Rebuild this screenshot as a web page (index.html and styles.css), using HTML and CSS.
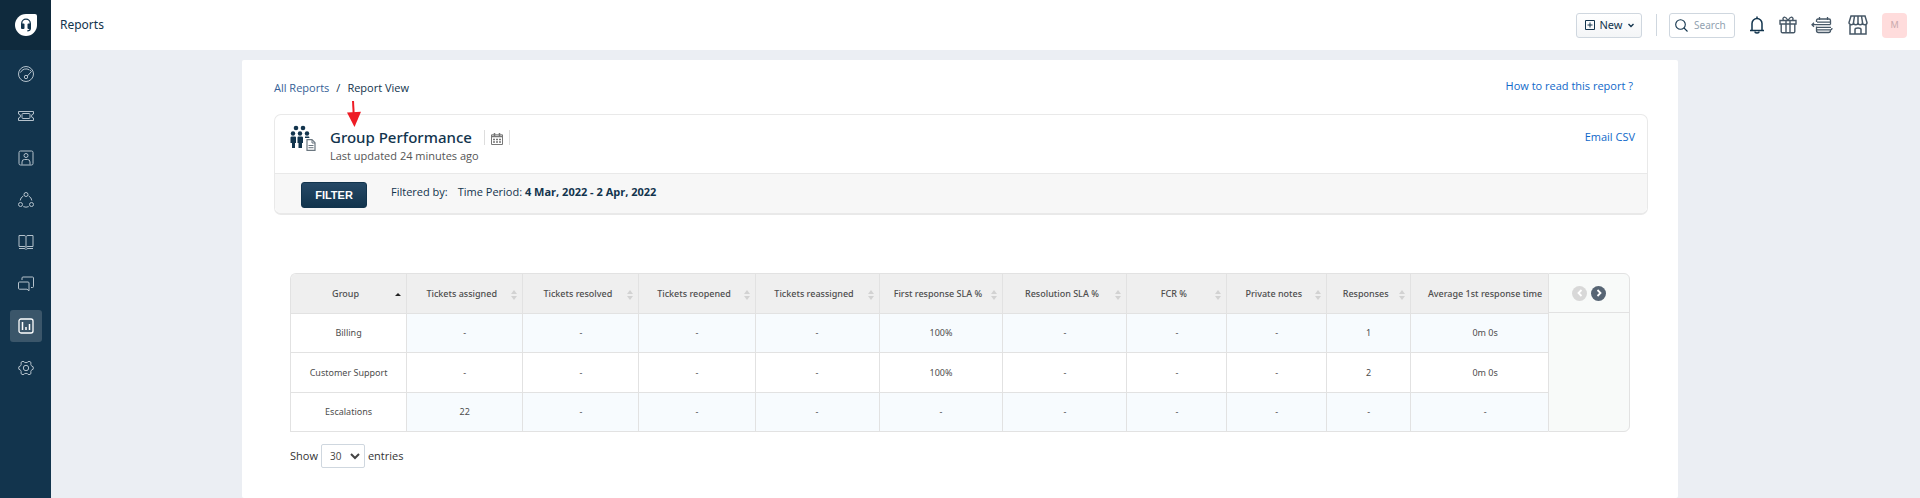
FILE: index.html
```html
<!DOCTYPE html>
<html lang="en">
<head>
<meta charset="utf-8">
<title>Reports</title>
<link rel="stylesheet" href="styles.css">
</head>
<body>
<div class="app">
  <aside class="sidebar">
    <a class="logo" href="#" aria-label="Home">
      <svg width="24" height="24" viewBox="0 0 24 24"><path d="M12 1h9a2 2 0 0 1 2 2v9A11 11 0 1 1 12 1z" fill="#fff"/><path d="M7.700 12.500V10.500a4.300 4.300 0 0 1 8.600 0v5q0 2.300-3 2.300" fill="none" stroke="#12344d" stroke-width="1.300"/><rect x="7" y="10.500" width="3.500" height="5.500" rx="1" fill="#12344d"/><rect x="13.500" y="10.500" width="3.500" height="5.500" rx="1" fill="#12344d"/></svg>
    </a>
    <nav class="nav">
      <a class="nav-item" href="#" aria-label="Dashboard"><svg class="line" width="18" height="18" viewBox="0 0 18 18"><circle cx="9" cy="9" r="7.500"/><path d="M3.500 7.500a6 6 0 0 1 9-2.500M14.500 6.500L10.300 11M13 5.200l1.500 1.300"/><circle cx="9" cy="12" r="1.700"/></svg></a>
      <a class="nav-item" href="#" aria-label="Tickets"><svg class="line" width="18" height="18" viewBox="0 0 18 18"><path d="M1.500 4.500h15v2.500a2 2 0 0 0 0 4v2.500h-15V11a2 2 0 0 0 0-4z"/><rect x="5" y="6.500" width="8" height="5" rx="1"/></svg></a>
      <a class="nav-item" href="#" aria-label="Contacts"><svg class="line" width="18" height="18" viewBox="0 0 18 18"><rect x="2" y="2" width="14" height="14" rx="1.500"/><circle cx="9" cy="6.500" r="2"/><path d="M5 15.500v-2.500q0-2.500 2.500-2.500h3q2.500 0 2.500 2.500v2.500"/></svg></a>
      <a class="nav-item" href="#" aria-label="Social"><svg class="line" width="18" height="18" viewBox="0 0 18 18"><circle cx="9" cy="3.500" r="2"/><circle cx="3.500" cy="13.500" r="2"/><circle cx="14.500" cy="13.500" r="2"/><path d="M6.300 5Q3.500 6.500 3.200 9.500M11.700 5q2.800 1.500 3.100 4.500M6.300 15.600q2.700 1.200 5.400 0"/></svg></a>
      <a class="nav-item" href="#" aria-label="Solutions"><svg class="line" width="18" height="18" viewBox="0 0 18 18"><path d="M9 3.500Q8.500 2.500 7 2.500H2v11h5q1.500 0 2 1 .5-1 2-1h5v-11h-5q-1.500 0-2 1zM9 3.500v11M2 15.500h5q1.500 0 2 1 .5-1 2-1h5"/></svg></a>
      <a class="nav-item" href="#" aria-label="Forums"><svg class="line" width="18" height="18" viewBox="0 0 18 18"><path d="M5 5V3q0-1 1-1h9.500q1 0 1 1v8.500q0 1-1 1H14"/><path d="M2.500 7H11q1 0 1 1v7.800L10 14.200H2.500q-1 0-1-1V8q0-1 1-1z"/></svg></a>
      <a class="nav-item active" href="#" aria-label="Reports" aria-current="page"><svg class="line" width="18" height="18" viewBox="0 0 18 18"><rect x="2" y="2" width="14" height="14" rx="2" stroke-width="1.300"/><path d="M5.500 5v8M9 10v3M12.500 7v6" stroke-width="1.500"/></svg></a>
      <a class="nav-item" href="#" aria-label="Admin"><svg class="line" width="18" height="18" viewBox="0 0 18 18"><path d="M6 2.200l1.600 1.100q1.400.8 2.800 0L12 2.200l2 1.200-.2 1.900q0 1.300 1.200 1.900l1.200.6v2.400l-1.200.6q-1.200.6-1.200 1.900l.2 1.900-2 1.200-1.600-1.100q-1.400-.8-2.800 0L6 15.800l-2-1.200.2-1.900q0-1.300-1.200-1.900l-1.200-.6V7.800L3 7.200q1.200-.6 1.200-1.900L4 3.400z"/><circle cx="9" cy="9" r="2.700"/></svg></a>
    </nav>
  </aside>
  <div class="page">
    <header class="topbar">
      <h1 class="title">Reports</h1>
      <div class="tools">
        <button class="new" type="button">
          <svg width="10" height="10" viewBox="0 0 10 10" fill="none" stroke="#12344d"><path d="M.5.5h9v9h-9zM5 2.500v5M2.500 5h5"/></svg>
          New
          <svg width="6" height="5" viewBox="0 0 6 5" fill="none" stroke="#12344d" stroke-width="1.400"><path d="M.5 1L3 3.500 5.500 1"/></svg>
        </button>
        <span class="rule"></span>
        <label class="search">
          <svg width="13" height="13" viewBox="0 0 13 13" fill="none" stroke="#12344d" stroke-width="1.100"><circle cx="5.500" cy="5.500" r="4.800"/><path d="M9 9l3.500 3.500"/></svg>
          <input type="text" placeholder="Search" aria-label="Search">
        </label>
        <button class="tool" type="button" aria-label="Notifications"><svg width="16" height="18" viewBox="0 0 16 18" fill="none" stroke="#12344d" stroke-width="1.500"><path d="M1 14.500h14M3 14.500V7.500a5 5 0 0 1 10 0v7M8 .5v2"/><path d="M6 15.500a2 1.500 0 0 0 4 0"/></svg></button>
        <button class="tool" type="button" aria-label="What's new"><svg width="18" height="18" viewBox="0 0 18 18" fill="none" stroke="#475867" stroke-width="1.400"><path d="M1 4.500h16V8H1zM2.200 8v7.500q0 1.300 1.300 1.300h11q1.300 0 1.300-1.300V8M7 4.500v12.300M11 4.500v12.300M9 4.500Q7 .8 5.300 1.200 3.200 2 4.500 4.500M9 4.500q2-3.700 3.700-3.300 2.100.8.800 3.300"/></svg></button>
        <button class="tool" type="button" aria-label="Switcher"><svg width="22" height="18" viewBox="0 0 22 18" fill="none" stroke="#475867" stroke-width="1.300"><path d="M5.500 6V4.500q0-1.500 1.500-1.500h11q1.500 0 1.500 1.500V8.500M8.500 1v3M16.500 1v3M6 6.200h13M1 8.700h18.500M3 6.700L1 8.700l2 2M5.500 10.500v4q0 2 2 2h10q2 0 2-2M6 11.300h14M6 13.900h13.500q1.500 0 1.500-2"/></svg></button>
        <button class="tool store" type="button" aria-label="Marketplace"><svg width="20" height="20" viewBox="0 0 20 20" fill="none" stroke="#475867" stroke-width="1.500"><path d="M3 1h14l2 6.500a2.200 2.200 0 0 1-4.500 0 2.200 2.200 0 0 1-4.500 0 2.200 2.200 0 0 1-4.500 0 2.200 2.200 0 0 1-4.500 0zM6.500 1l-1 6.500M13.500 1l1 6.500M10 1v6.500M2 10v9h16v-9M7 19v-4.500q0-1.500 3-1.500t3 1.500V19"/></svg></button>
        <button class="avatar" type="button">M</button>
      </div>
    </header>
    <main class="main">
      <section class="sheet">
        <div class="crumbs">
          <div class="trail"><a class="crumb" href="#">All Reports</a><span>/</span><span>Report View</span></div>
          <a class="link help" href="#">How to read this report ?</a>
        </div>
        <div class="card">
          <svg class="pointer" width="16" height="28" viewBox="0 0 16 28"><path d="M7 1l.7 13" stroke="#ee1c25" stroke-width="2"/><path d="M1 12.500l14-.8L8.500 27z" fill="#ee1c25"/></svg>
          <div class="card-head">
            <svg class="group-icon" width="26" height="26" viewBox="0 0 26 26" fill="#12344d"><circle cx="6" cy="3" r="2.300"/><circle cx="13" cy="3" r="2.300"/><circle cx="3" cy="8.500" r="2.200"/><circle cx="10" cy="8.500" r="2.200"/><circle cx="17" cy="8.500" r="2.200"/><path d="M2 11.500h3q1 0 1 1V18H5v5H2v-5H.500v-5.500q0-1 1.500-1zM8.500 11.500h3q1.500 0 1.500 1V18h-1v5H8.500v-5h-1v-5.500q0-1 1-1zM15 11.500h4l.5 1.500H15z"/><path d="M17 14.700h5l3 3v7.600h-8z" fill="#fff" stroke="#6b7780" stroke-width="1.200"/><path d="M18.500 20.500h5M18.500 22.700h5M22 15v3h3" fill="none" stroke="#6b7780"/></svg>
            <div class="heading">
              <div class="heading-row">
                <h2 class="report-name">Group Performance</h2>
                <button class="schedule" type="button" aria-label="Schedule"><svg width="12" height="12" viewBox="0 0 12 12"><path d="M.5 1.800h11v9.700H.5z" fill="#fff" stroke="#777"/><path d="M.5 3.500h11M3.500 0v3M8.500 0v3" stroke="#777" stroke-width="1.500"/><path d="M2 6.500h8M2 9h8" stroke="#777" stroke-width="1.500" stroke-dasharray="2 1"/></svg></button>
              </div>
              <p class="updated">Last updated 24 minutes ago</p>
            </div>
            <a class="link email" href="#">Email CSV</a>
          </div>
          <div class="card-filter">
            <button class="filter" type="button">FILTER</button>
            <p class="filtered"><span>Filtered by:</span><span>Time Period: <b>4 Mar, 2022 - 2 Apr, 2022</b></span></p>
          </div>
        </div>
        <div class="grid">
          <div class="table-wrap">
          <table class="table">
            <colgroup><col class="c-m"><col class="c-m"><col class="c-m"><col class="c-m"><col class="c-l"><col class="c-l"><col class="c-l"><col class="c-s"><col class="c-s"><col class="c-xs"><col></colgroup>
            <thead><tr>
              <th><span class="th up">Group</span></th>
              <th><span class="th both">Tickets assigned</span></th>
              <th><span class="th both">Tickets resolved</span></th>
              <th><span class="th both">Tickets reopened</span></th>
              <th><span class="th both">Tickets reassigned</span></th>
              <th><span class="th both">First response SLA %</span></th>
              <th><span class="th both">Resolution SLA %</span></th>
              <th><span class="th both">FCR %</span></th>
              <th><span class="th both">Private notes</span></th>
              <th><span class="th both">Responses</span></th>
              <th>Average 1st response time</th>
            </tr></thead>
            <tbody>
              <tr><td>Billing</td><td>-</td><td>-</td><td>-</td><td>-</td><td>100%</td><td>-</td><td>-</td><td>-</td><td>1</td><td>0m 0s</td></tr>
              <tr><td>Customer Support</td><td>-</td><td>-</td><td>-</td><td>-</td><td>100%</td><td>-</td><td>-</td><td>-</td><td>2</td><td>0m 0s</td></tr>
              <tr><td>Escalations</td><td>22</td><td>-</td><td>-</td><td>-</td><td>-</td><td>-</td><td>-</td><td>-</td><td>-</td><td>-</td></tr>
            </tbody>
          </table>
          </div>
          <div class="pager">
            <div class="pager-head">
              <button class="step off" type="button" aria-label="Previous columns"><svg width="6" height="8" viewBox="0 0 6 8" fill="none" stroke="#fff" stroke-width="1.800"><path d="M4.500 1L1.500 4l3 3"/></svg></button>
              <button class="step" type="button" aria-label="Next columns"><svg width="6" height="8" viewBox="0 0 6 8" fill="none" stroke="#fff" stroke-width="1.800"><path d="M1.500 1l3 3-3 3"/></svg></button>
            </div>
          </div>
        </div>
        <label class="entries">Show
          <span class="select-box"><select class="select"><option>30</option><option>50</option></select><svg class="chev" width="10" height="7" viewBox="0 0 10 7" fill="none" stroke="#444" stroke-width="2"><path d="M1 1l4 4 4-4"/></svg></span>
          entries</label>
      </section>
    </main>
  </div>
</div>
</body>
</html>
```
FILE: styles.css
```css
* { box-sizing: border-box; }
body { margin: 0; font: 12px/16px "Noto Sans", "Open Sans", sans-serif; color: #12344d; background: #ebeef3; }
h1, h2, p { margin: 0; font-weight: 400; }
a { text-decoration: none; }
button, input, select { font: inherit; color: inherit; }
svg { display: block; flex: none; }
.app { display: flex; min-height: 100vh; }
.sidebar { width: 51px; flex: none; background: #12344d; }
.logo { display: flex; justify-content: center; align-items: center; height: 50px; background: #0f2a3d; }
.nav { display: flex; flex-direction: column; align-items: center; gap: 10px; padding: 8px 0 0 1px; }
.nav-item { display: flex; align-items: center; justify-content: center; width: 32px; height: 32px; border-radius: 3px; color: #b5c2cc; }
.nav-item.active { background: #3b566a; color: #fff; }
.line { fill: none; stroke: currentColor; }
.page { flex: 1; min-width: 0; display: flex; flex-direction: column; }
.topbar { display: flex; align-items: center; justify-content: space-between; height: 50px; padding: 0 13px 0 9px; background: #fff; }
.title { font-size: 12px; color: #12344d; }
.tools { display: flex; align-items: center; gap: 14px; }
.new { display: flex; align-items: center; justify-content: center; gap: 5px; width: 66px; height: 25px; padding: 0; border: 1px solid #cfd7df; border-radius: 3px; background: linear-gradient(#fff, #f3f5f7); font-size: 11px; }
.rule { width: 1px; height: 22px; background: #cfd7df; }
.search { display: flex; align-items: center; gap: 6px; width: 66px; height: 25px; padding: 0 5px; margin-left: -2px; border: 1px solid #cfd7df; border-radius: 3px; }
.search input { width: 100%; min-width: 0; padding: 0; border: 0; outline: 0; background: none; font-size: 10px; }
.search input::placeholder { color: #92a2b1; opacity: 1; }
.tool { padding: 0; border: 0; background: none; }
.store { margin-left: 1px; }
.avatar { width: 25px; height: 25px; padding: 0; border: 0; border-radius: 4px; background: #ffdcdc; color: #c9a9ac; font-size: 9px; }
.main { flex: 1; display: flex; justify-content: center; padding: 10px 51px 0 0; }
.sheet { width: 100%; max-width: 1436px; padding: 18px 30px 30px 32px; border-radius: 2px; background: #fff; font-family: "Open Sans", "Noto Sans", sans-serif; }
.crumbs { display: flex; justify-content: space-between; padding-right: 15px; font-size: 11px; line-height: 20px; }
.trail { display: flex; gap: 7px; }
.crumb { color: #355f97; }
.link { color: #1068c9; }
.help { line-height: 16px; }
.card { position: relative; margin-top: 16px; border: 1px solid #e9e9e9; border-bottom-width: 2px; border-radius: 7px; }
.pointer { position: absolute; left: 71px; top: -15px; }
.card-head { display: flex; align-items: flex-start; padding: 10px 12px 10px 15px; }
.heading { flex: 1; margin-left: 14px; }
.heading-row { display: flex; align-items: center; gap: 12px; }
.report-name { font: 500 15px/24px "Noto Sans", sans-serif; }
.schedule { padding: 3px 6px 0; border: solid #ddd; border-width: 0 1px; background: none; }
.updated { font-size: 11px; line-height: 14px; color: #555; }
.email { margin-top: 4px; font-size: 11px; }
.card-filter { display: flex; align-items: flex-start; gap: 24px; padding: 8px 26px 5px; border-top: 1px solid #e9e9e9; border-radius: 0 0 6px 6px; background: #f7f7f7; }
.filter { width: 66px; height: 26px; padding: 0; border: 1px solid #12344d; border-radius: 3px; background: linear-gradient(#264966, #12344d); color: #fff; font: bold 11px "Liberation Sans", Arial, sans-serif; }
.filtered { display: flex; gap: 10px; font-size: 11px; line-height: 20px; }
.grid { display: flex; align-items: stretch; margin: 58px 18px 0 16px; font-family: "Noto Sans", sans-serif; font-size: 9px; color: #4d4d4d; }
.table-wrap { flex: 1; min-width: 0; }
.table { width: 100%; table-layout: fixed; border-collapse: separate; border-spacing: 0; border: 1px solid #e2e2e2; border-width: 1px 0 0 1px; border-radius: 6px 0 0 0; }
.c-m { width: 9.240%; }
.c-l { width: 9.860%; }
.c-s { width: 7.950%; }
.c-xs { width: 6.680%; }
.table th, .table td { padding: 0; text-align: center; white-space: nowrap; border: solid #e2e2e2; border-width: 0 1px 1px 0; }
.table th:last-child, .table td:last-child { padding-left: 11px; border-right: 0; }
.table th { height: 40px; background: #efefef; font-weight: 500; }
.table th:first-child { border-top-left-radius: 5px; }
.table td { height: 39px; }
.table tbody tr:nth-child(2) td { height: 40px; }
.table tr:nth-child(odd) td:not(:first-child) { background: #f7fbfe; }
.th { display: block; padding-right: 6px; line-height: 20px; }
.both, .up { position: relative; }
.both::before, .both::after, .up::before { content: ""; position: absolute; right: 5px; border: solid transparent; border-width: 0 3px; }
.both::before { top: 6px; border-bottom: 4px solid #d2d2d2; }
.both::after { top: 12px; border-top: 4px solid #d2d2d2; }
.up::before { top: 9px; border-bottom: 3px solid #222; }
.pager { width: 82px; flex: none; border: 1px solid #e2e2e2; border-radius: 0 6px 6px 0; background: #f8faf9; }
.pager-head { display: flex; align-items: center; justify-content: center; gap: 4px; height: 39px; border-bottom: 1px solid #e2e2e2; }
.step { display: flex; align-items: center; justify-content: center; width: 15px; height: 15px; padding: 0; border: 0; border-radius: 50%; background: #576574; }
.step.off { background: #d8d8d8; }
.entries { display: flex; align-items: center; gap: 3px; margin: 12px 16px 0; font-size: 11px; color: #333; }
.select-box { position: relative; display: flex; }
.select { width: 44px; height: 24px; padding: 0 8px; border: 1px solid #cfd7df; border-radius: 2px; appearance: none; background: #fff; font-size: 10px; color: #444; }
.chev { position: absolute; right: 5px; top: 9px; pointer-events: none; }
```
